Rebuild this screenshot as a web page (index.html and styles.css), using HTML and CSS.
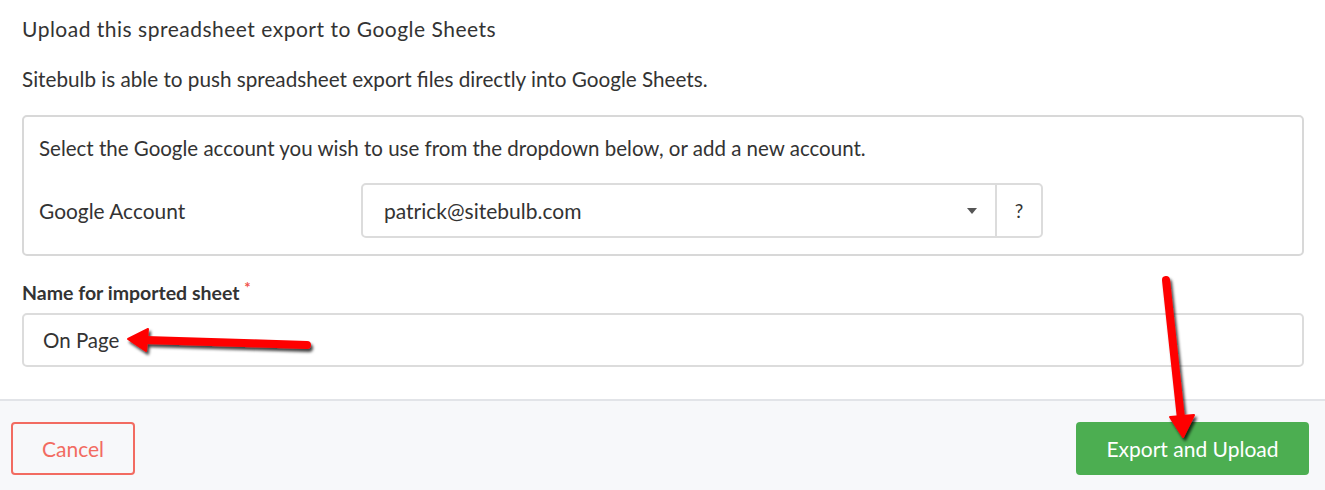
FILE: index.html
```html
<!DOCTYPE html>
<html lang="en">
<head>
    <meta charset="UTF-8">
    <title>Upload to Google Sheets</title>
    <link rel="stylesheet" href="styles.css">
</head>
<body>

    <div class="dialog">
        <div class="dialog-body">
            <h2 class="title">Upload this spreadsheet export to Google Sheets</h2>
            <p class="intro">Sitebulb is able to push spreadsheet export files directly into Google Sheets.</p>

            <div class="account-box">
                <p class="hint">Select the Google account you wish to use from the dropdown below, or add a new account.</p>
                <div class="account-row">
                    <span class="row-label">Google Account</span>
                    <div class="select-group">
                        <div class="select">
                            <span>patrick@sitebulb.com</span>
                            <span class="caret"></span>
                        </div>
                        <div class="help">?</div>
                    </div>
                </div>
            </div>

            <label class="field-label" for="sheet-name">Name for imported sheet <span class="required">*</span></label>
            <input type="text" id="sheet-name" class="text-input" value="On Page">
        </div>

        <div class="dialog-footer">
            <button class="cancel-btn">Cancel</button>
            <button class="export-btn">Export and Upload</button>
        </div>

        <!-- annotation arrows drawn over the dialog -->
        <svg class="arrows" width="1325" height="490" viewBox="0 0 1325 490">
            <defs>
                <filter id="shadow" x="-20%" y="-20%" width="140%" height="140%">
                    <feDropShadow dx="2" dy="3" stdDeviation="1.5" flood-color="#000" flood-opacity="0.75"/>
                </filter>
            </defs>
            <g filter="url(#shadow)" fill="#f00" stroke="#f00">
                <line x1="307" y1="345" x2="146" y2="340" stroke-width="8" stroke-linecap="round"/>
                <polygon points="128,339 148,329 146,351" stroke-width="2" stroke-linejoin="round"/>
                <line x1="1166" y1="280" x2="1181" y2="419" stroke-width="8" stroke-linecap="round"/>
                <polygon points="1183,437 1170,417 1194,415" stroke-width="2" stroke-linejoin="round"/>
            </g>
        </svg>
    </div>

</body>
</html>
```

FILE: styles.css
```css
body {
    margin: 0;
    font-family: Lato, "Liberation Sans", sans-serif;
    color: #333;
    background: #fff;
}
.dialog {
    position: relative;
    width: 1325px;
    height: 490px;
    overflow: hidden;
}
.dialog-body {
    padding: 17px 21px 32px 22px;
    border-bottom: 2px solid #e2e4e8;
}
.title {
    margin: 0;
    font-size: 21px;
    font-weight: normal;
    letter-spacing: 0.5px;
    line-height: 24px;
}
.intro {
    margin: 26px 0 0;
    font-size: 20.7px;
    line-height: 24px;
}
.account-box {
    margin-top: 24px;
    border: 2px solid #d8d8d8;
    border-radius: 5px;
    padding: 19px 15px 16px;
}
.hint {
    margin: 0;
    font-size: 20.5px;
    line-height: 24px;
}
.account-row {
    display: flex;
    align-items: center;
    margin-top: 23px;
}
.row-label {
    width: 322px;
    font-size: 20.9px;
}
.select-group {
    display: flex;
    width: 682px;
    height: 55px;
    box-sizing: border-box;
    border: 2px solid #dcdcdc;
    border-radius: 5px;
}
.select {
    flex: 1;
    display: flex;
    align-items: center;
    justify-content: space-between;
    padding: 0 18px 0 21px;
    font-size: 21px;
}
.caret {
    width: 0;
    height: 0;
    border-left: 5px solid transparent;
    border-right: 5px solid transparent;
    border-top: 6px solid #555;
}
.help {
    width: 44px;
    border-left: 2px solid #dcdcdc;
    display: flex;
    align-items: center;
    justify-content: center;
    font-size: 19px;
}
.field-label {
    display: block;
    margin-top: 25px;
    font-size: 19.5px;
    font-weight: bold;
    line-height: 24px;
}
.required {
    color: #f0524a;
    font-size: 15px;
    vertical-align: top;
    position: relative;
    top: -6px;
}
.text-input {
    display: block;
    width: 100%;
    height: 54px;
    margin-top: 8px;
    box-sizing: border-box;
    border: 2px solid #dcdcdc;
    border-radius: 5px;
    padding: 0 19px;
    font-family: inherit;
    font-size: 20.5px;
    color: #333;
}
.dialog-footer {
    background: #f7f8fa;
    height: 88px;
    display: flex;
    justify-content: space-between;
    align-items: flex-start;
    padding: 21px 16px 0 11px;
}
button {
    font-family: inherit;
    font-size: 21px;
    border-radius: 4px;
    cursor: pointer;
}
.cancel-btn {
    width: 124px;
    height: 53px;
    background: transparent;
    border: 2px solid #f26b61;
    color: #f26b61;
}
.export-btn {
    width: 233px;
    height: 53px;
    background: #4cae51;
    border: none;
    color: #fff;
}
.arrows {
    position: absolute;
    left: 0;
    top: 0;
    pointer-events: none;
}
```
